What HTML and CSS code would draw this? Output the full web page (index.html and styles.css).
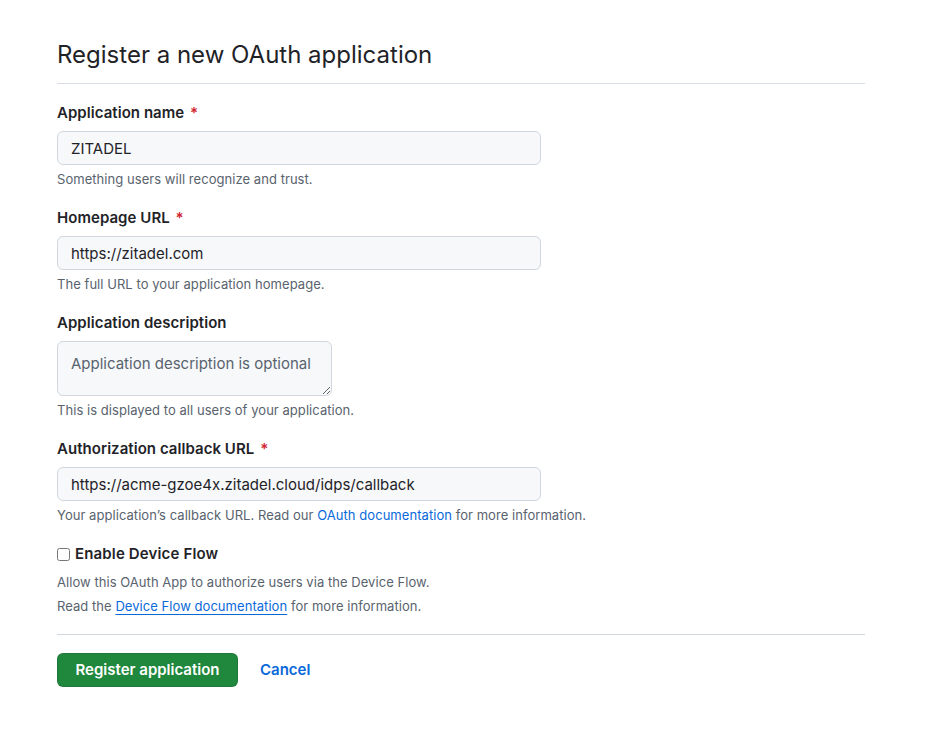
FILE: index.html
```html
<!DOCTYPE html>
<html lang="en">
<head>
<meta charset="utf-8">
<title>Register a new OAuth application</title>
<link rel="stylesheet" href="styles.css">
</head>
<body>
<main class="page">
  <h2 class="subhead">Register a new OAuth application</h2>
  <form class="form">
    <div class="field">
      <label class="label">Application name <span class="req">*</span></label>
      <input class="input" type="text" value="ZITADEL">
      <p class="note">Something users will recognize and trust.</p>
    </div>
    <div class="field">
      <label class="label">Homepage URL <span class="req">*</span></label>
      <input class="input" type="text" value="https://zitadel.com">
      <p class="note">The full URL to your application homepage.</p>
    </div>
    <div class="field">
      <label class="label">Application description</label>
      <textarea class="textarea" placeholder="Application description is optional"></textarea>
      <p class="note">This is displayed to all users of your application.</p>
    </div>
    <div class="field">
      <label class="label">Authorization callback URL <span class="req">*</span></label>
      <input class="input" type="text" value="https://acme-gzoe4x.zitadel.cloud/idps/callback">
      <p class="note">Your application’s callback URL. Read our <a class="link" href="#">OAuth documentation</a> for more information.</p>
    </div>
    <div class="field check-field">
      <label class="check-label"><input class="checkbox" type="checkbox">Enable Device Flow</label>
      <p class="note note-first">Allow this OAuth App to authorize users via the Device Flow.</p>
      <p class="note note-second">Read the <a class="link link-underline" href="#">Device Flow documentation</a> for more information.</p>
    </div>
    <div class="actions">
      <button class="btn-primary" type="button">Register application</button>
      <a class="cancel" href="#">Cancel</a>
    </div>
  </form>
</main>
</body>
</html>
```
FILE: styles.css
```css
* { box-sizing: border-box; }
html, body { margin: 0; padding: 0; background: #ffffff; }
body {
  font-family: Inter, "Liberation Sans", Arial, sans-serif;
  color: #1f2328;
  font-size: 14px;
  line-height: 1.5;
}
.page {
  width: 808px;
  margin-left: 57px;
  padding-top: 37px;
}
.subhead {
  margin: 0;
  font-size: 24px;
  font-weight: 400;
  line-height: 36px;
  padding-bottom: 10px;
  border-bottom: 1px solid #d8dee4;
}
.form {
  padding-top: 19px;
}
.field {
  display: flex;
  flex-direction: column;
  align-items: flex-start;
  margin-bottom: 20px;
}
.label {
  font-size: 15px;
  font-weight: 600;
  line-height: 20px;
  letter-spacing: 0.05px;
  margin-bottom: 8px;
}
.req { color: #d1242f; margin-left: 2px; }
.input, .textarea {
  margin: 0;
  font-family: inherit;
  font-size: 15px;
  line-height: 20px;
  color: #1f2328;
  background: #f6f8fa;
  border: 1px solid #d0d7de;
  border-radius: 6px;
  outline: none;
}
.input {
  width: 484px;
  height: 34px;
  padding: 6px 13px;
}
.textarea {
  width: 275px;
  height: 55px;
  padding: 12px 13px 8px;
  resize: vertical;
}
.textarea::placeholder { color: #59636e; opacity: 1; }
.note {
  margin: 5px 0 0;
  font-size: 13px;
  line-height: 18px;
  letter-spacing: 0.05px;
  color: #59636e;
}
.link { color: #0969da; text-decoration: none; }
.link-underline { text-decoration: underline; text-underline-offset: 3px; }
.check-field { margin-bottom: 0; }
.check-label {
  display: flex;
  align-items: center;
  font-size: 15px;
  font-weight: 600;
  line-height: 20px;
  letter-spacing: 0.15px;
}
.checkbox {
  width: 13px;
  height: 13px;
  margin: 0 5px 0 0;
}
.note-first { margin-top: 9px; }
.note-second { margin-top: 6px; }
.actions {
  margin-top: 19px;
  border-top: 1px solid #d0d7de;
  padding-top: 18px;
  display: flex;
  align-items: center;
}
.btn-primary {
  margin: 0;
  font-family: inherit;
  font-size: 15px;
  font-weight: 600;
  line-height: 20px;
  height: 34px;
  width: 181px;
  padding: 0;
  color: #ffffff;
  background: #1f883d;
  border: 1px solid rgba(31, 35, 40, 0.15);
  border-radius: 6px;
}
.cancel {
  margin-left: 22px;
  font-size: 15px;
  font-weight: 600;
  color: #0969da;
  text-decoration: none;
}
```
